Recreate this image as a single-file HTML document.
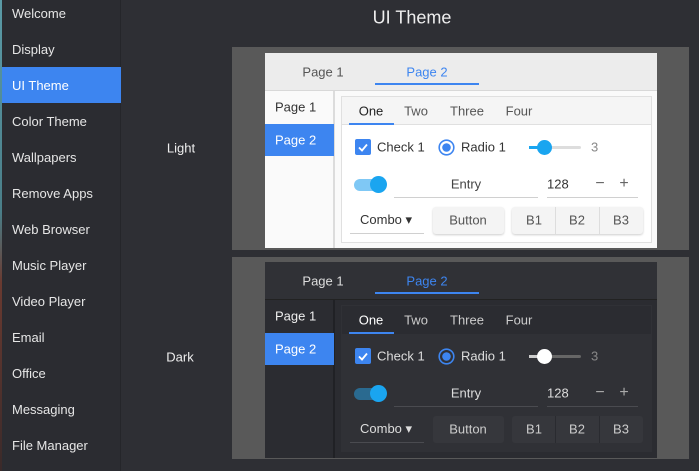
<!DOCTYPE html><html><head><style>
*{margin:0;padding:0;box-sizing:border-box}
body{width:699px;height:471px;background:#2e2f34;font-family:"Liberation Sans","DejaVu Sans",sans-serif;position:relative;overflow:hidden;color:#eee}
.a{position:absolute}
.strip{left:0;top:0;width:2px;height:471px;background:linear-gradient(#5a9aa6,#4a7e88 45%,#6a3a30 60%,#3a2a2a)}
.side{left:2px;top:0;width:119px;height:471px;background:#2b2c31;border-right:1px solid #25262a}
.si{position:absolute;left:0;width:119px;height:36px;line-height:37px;padding-left:10px;font-size:13px;color:#e6e6e6}
.si.sel{background:#3d85f0;color:#fff}
.t{font-size:13px;white-space:nowrap;transform:translate(-50%,-50%)}
.tl{font-size:13px;white-space:nowrap;transform:translateY(-50%)}
.m{font-weight:bold;-webkit-text-stroke:0}
</style></head><body>
<div class="a strip"></div>
<div class="a side">
<div class="si" style="top:-5px">Welcome</div>
<div class="si" style="top:31px">Display</div>
<div class="si sel" style="top:67px">UI Theme</div>
<div class="si" style="top:103px">Color Theme</div>
<div class="si" style="top:139px">Wallpapers</div>
<div class="si" style="top:175px">Remove Apps</div>
<div class="si" style="top:211px">Web Browser</div>
<div class="si" style="top:247px">Music Player</div>
<div class="si" style="top:283px">Video Player</div>
<div class="si" style="top:319px">Email</div>
<div class="si" style="top:355px">Office</div>
<div class="si" style="top:391px">Messaging</div>
<div class="si" style="top:427px">File Manager</div>
</div>
<div class="a t" style="left:412px;top:18px;font-size:18px;color:#eee">UI Theme</div>
<div class="a t" style="left:181px;top:148px;color:#eee">Light</div>
<div class="a t" style="left:180px;top:357px;color:#eee">Dark</div>
<div class="a" style="left:232px;top:47px;width:457px;height:203px;background:#595959"></div>
<div class="a" style="left:232px;top:257px;width:457px;height:202px;background:#595959"></div>

<!-- LIGHT -->
<div class="a" style="left:265px;top:53px;width:392px;height:195px;background:#fafafa"></div>
<div class="a" style="left:265px;top:53px;width:392px;height:38px;background:#ececec;border-bottom:1px solid #d8d8d8"></div>
<div class="a t" style="left:323px;top:72px;color:#555">Page 1</div>
<div class="a t" style="left:427px;top:72px;color:#3d85f0">Page 2</div>
<div class="a" style="left:375px;top:83px;width:104px;height:2px;background:#3d85f0"></div>
<div class="a" style="left:265px;top:91px;width:70px;height:157px;background:#fafafa;border-right:2px solid #dcdcdc"></div>
<div class="a tl" style="left:275px;top:107px;color:#333">Page 1</div>
<div class="a" style="left:265px;top:124px;width:69px;height:32px;background:#3d85f0"></div>
<div class="a tl" style="left:275px;top:140px;color:#fff">Page 2</div>
<div class="a" style="left:341px;top:96px;width:311px;height:147px;background:#fff;border:1px solid #e0e0e0"></div>
<div class="a" style="left:342px;top:97px;width:309px;height:28px;background:#f5f5f5;border-bottom:1px solid #e0e0e0"></div>
<div class="a t" style="left:371px;top:111px;color:#222">One</div>
<div class="a t" style="left:416px;top:111px;color:#555">Two</div>
<div class="a t" style="left:467px;top:111px;color:#555">Three</div>
<div class="a t" style="left:519px;top:111px;color:#555">Four</div>
<div class="a" style="left:349px;top:123px;width:45px;height:2px;background:#3d85f0"></div>
<svg class="a" style="left:355px;top:139px" width="16" height="16"><rect width="16" height="16" rx="2" fill="#3d85f0"/><path d="M4 8.5l3 3 5-6" stroke="#fff" stroke-width="1.8" fill="none"/></svg>
<div class="a tl" style="left:377px;top:147px;color:#333">Check 1</div>
<svg class="a" style="left:438px;top:139px" width="17" height="17"><circle cx="8.5" cy="8.5" r="7.3" fill="none" stroke="#3d85f0" stroke-width="1.6"/><circle cx="8.5" cy="8.5" r="4.3" fill="#3d85f0"/></svg>
<div class="a tl" style="left:461px;top:147px;color:#333">Radio 1</div>
<div class="a" style="left:529px;top:146px;width:52px;height:3px;background:#ddd;border-radius:2px"></div>
<div class="a" style="left:529px;top:146px;width:15px;height:3px;background:#1aa5f0"></div>
<div class="a" style="left:537px;top:140px;width:15px;height:15px;border-radius:50%;background:#1aa5f0"></div>
<div class="a tl" style="left:591px;top:147px;color:#888">3</div>
<div class="a" style="left:354px;top:179px;width:30px;height:12px;border-radius:6px;background:#7fc8f5"></div>
<div class="a" style="left:370px;top:176px;width:17px;height:17px;border-radius:50%;background:#1aa5f0"></div>
<div class="a t" style="left:466px;top:184px;color:#444">Entry</div>
<div class="a" style="left:394px;top:197px;width:144px;height:1px;background:#d0d0d0"></div>
<div class="a tl" style="left:547px;top:184px;color:#333">128</div>
<div class="a t" style="left:600px;top:184px;color:#666;font-size:16px">−</div>
<div class="a t" style="left:624px;top:184px;color:#666;font-size:16px">+</div>
<div class="a" style="left:547px;top:197px;width:91px;height:1px;background:#d0d0d0"></div>
<div class="a tl" style="left:360px;top:220px;color:#333">Combo ▾</div>
<div class="a" style="left:350px;top:233px;width:74px;height:1px;background:#d0d0d0"></div>
<div class="a" style="left:433px;top:207px;width:71px;height:27px;background:#f4f4f4;border-radius:3px;box-shadow:0 1px 2px rgba(0,0,0,.2)"></div>
<div class="a t" style="left:468px;top:220px;color:#555">Button</div>
<div class="a" style="left:512px;top:207px;width:131px;height:27px;background:#f4f4f4;border-radius:3px;box-shadow:0 1px 2px rgba(0,0,0,.2)"></div>
<div class="a" style="left:555px;top:207px;width:1px;height:27px;background:#ddd"></div>
<div class="a" style="left:599px;top:207px;width:1px;height:27px;background:#ddd"></div>
<div class="a t" style="left:534px;top:220px;color:#555">B1</div>
<div class="a t" style="left:577px;top:220px;color:#555">B2</div>
<div class="a t" style="left:621px;top:220px;color:#555">B3</div>

<!-- DARK -->
<div class="a" style="left:265px;top:262px;width:392px;height:196px;background:#2b2c31"></div>
<div class="a" style="left:265px;top:262px;width:392px;height:38px;background:#303136;border-bottom:1px solid #222"></div>
<div class="a t" style="left:323px;top:281px;color:#ddd">Page 1</div>
<div class="a t" style="left:427px;top:281px;color:#3d85f0">Page 2</div>
<div class="a" style="left:375px;top:292px;width:104px;height:2px;background:#3d85f0"></div>
<div class="a" style="left:265px;top:300px;width:70px;height:158px;background:#2b2c31;border-right:2px solid #202125"></div>
<div class="a tl" style="left:275px;top:316px;color:#eee">Page 1</div>
<div class="a" style="left:265px;top:333px;width:69px;height:32px;background:#3d85f0"></div>
<div class="a tl" style="left:275px;top:349px;color:#fff">Page 2</div>
<div class="a" style="left:341px;top:305px;width:311px;height:147px;background:#303136"></div>
<div class="a" style="left:342px;top:306px;width:309px;height:28px;background:#2b2c31"></div>
<div class="a t" style="left:371px;top:320px;color:#fff">One</div>
<div class="a t" style="left:416px;top:320px;color:#ccc">Two</div>
<div class="a t" style="left:467px;top:320px;color:#ccc">Three</div>
<div class="a t" style="left:519px;top:320px;color:#ccc">Four</div>
<div class="a" style="left:349px;top:332px;width:45px;height:2px;background:#3d85f0"></div>
<svg class="a" style="left:355px;top:348px" width="16" height="16"><rect width="16" height="16" rx="2" fill="#3d85f0"/><path d="M4 8.5l3 3 5-6" stroke="#fff" stroke-width="1.8" fill="none"/></svg>
<div class="a tl" style="left:377px;top:356px;color:#ddd">Check 1</div>
<svg class="a" style="left:438px;top:348px" width="17" height="17"><circle cx="8.5" cy="8.5" r="7.3" fill="none" stroke="#3d85f0" stroke-width="1.6"/><circle cx="8.5" cy="8.5" r="4.3" fill="#3d85f0"/></svg>
<div class="a tl" style="left:461px;top:356px;color:#ddd">Radio 1</div>
<div class="a" style="left:529px;top:355px;width:52px;height:3px;background:#666;border-radius:2px"></div>
<div class="a" style="left:529px;top:355px;width:15px;height:3px;background:#ccc"></div>
<div class="a" style="left:537px;top:349px;width:15px;height:15px;border-radius:50%;background:#fff"></div>
<div class="a tl" style="left:591px;top:356px;color:#888">3</div>
<div class="a" style="left:354px;top:388px;width:30px;height:12px;border-radius:6px;background:#2a6a90"></div>
<div class="a" style="left:370px;top:385px;width:17px;height:17px;border-radius:50%;background:#1aa5f0"></div>
<div class="a t" style="left:466px;top:393px;color:#ddd">Entry</div>
<div class="a" style="left:394px;top:406px;width:144px;height:1px;background:#4a4b50"></div>
<div class="a tl" style="left:547px;top:393px;color:#ddd">128</div>
<div class="a t" style="left:600px;top:393px;color:#aaa;font-size:16px">−</div>
<div class="a t" style="left:624px;top:393px;color:#aaa;font-size:16px">+</div>
<div class="a" style="left:547px;top:406px;width:91px;height:1px;background:#4a4b50"></div>
<div class="a tl" style="left:360px;top:429px;color:#ddd">Combo ▾</div>
<div class="a" style="left:350px;top:442px;width:74px;height:1px;background:#4a4b50"></div>
<div class="a" style="left:433px;top:416px;width:71px;height:27px;background:#36373c;border-radius:3px"></div>
<div class="a t" style="left:468px;top:429px;color:#ccc">Button</div>
<div class="a" style="left:512px;top:416px;width:131px;height:27px;background:#36373c;border-radius:3px"></div>
<div class="a" style="left:555px;top:416px;width:1px;height:27px;background:#2a2b30"></div>
<div class="a" style="left:599px;top:416px;width:1px;height:27px;background:#2a2b30"></div>
<div class="a t" style="left:534px;top:429px;color:#ccc">B1</div>
<div class="a t" style="left:577px;top:429px;color:#ccc">B2</div>
<div class="a t" style="left:621px;top:429px;color:#ccc">B3</div>
</body></html>
